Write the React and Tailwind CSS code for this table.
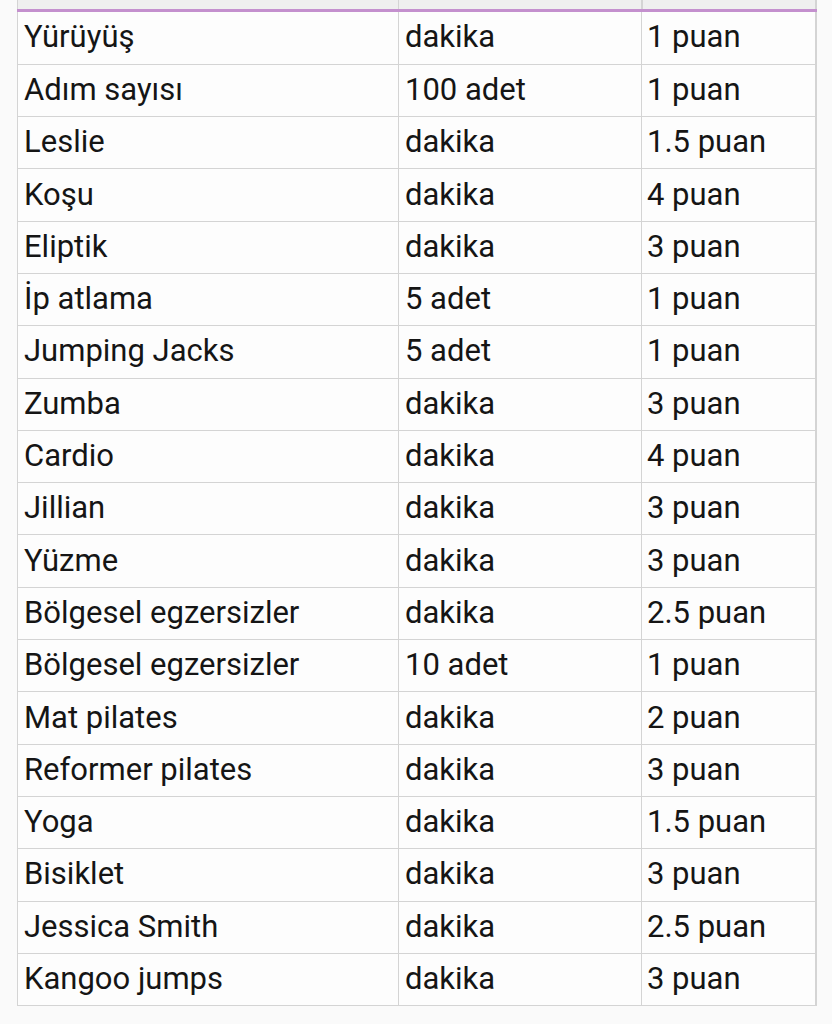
const rows = [
  ["Yürüyüş", "dakika", "1 puan"],
  ["Adım sayısı", "100 adet", "1 puan"],
  ["Leslie", "dakika", "1.5 puan"],
  ["Koşu", "dakika", "4 puan"],
  ["Eliptik", "dakika", "3 puan"],
  ["İp atlama", "5 adet", "1 puan"],
  ["Jumping Jacks", "5 adet", "1 puan"],
  ["Zumba", "dakika", "3 puan"],
  ["Cardio", "dakika", "4 puan"],
  ["Jillian", "dakika", "3 puan"],
  ["Yüzme", "dakika", "3 puan"],
  ["Bölgesel egzersizler", "dakika", "2.5 puan"],
  ["Bölgesel egzersizler", "10 adet", "1 puan"],
  ["Mat pilates", "dakika", "2 puan"],
  ["Reformer pilates", "dakika", "3 puan"],
  ["Yoga", "dakika", "1.5 puan"],
  ["Bisiklet", "dakika", "3 puan"],
  ["Jessica Smith", "dakika", "2.5 puan"],
  ["Kangoo jumps", "dakika", "3 puan"],
];

export default function App() {
  return (
    <div className="min-h-[1024px] w-[832px] bg-[#fafafa] pl-[17px] text-[#151515] [font-family:Roboto,'Noto_Sans',sans-serif]">
      <table className="w-[798px] table-fixed border-collapse bg-[#fdfdfd]">
        <colgroup>
          <col className="w-[381px]" />
          <col className="w-[243px]" />
          <col className="w-[174px]" />
        </colgroup>
        <thead>
          <tr className="h-[10px] border-b-[3px] border-b-[#c490ce] bg-[#efefef]">
            <th className="border-x border-[#d4d4d4]"></th>
            <th className="border-x border-[#d4d4d4]"></th>
            <th className="border-x-2 border-[#d4d4d4]"></th>
          </tr>
        </thead>
        <tbody>
          {rows.map(([name, unit, pts], i) => (
            <tr
              key={i}
              className={
                (i === 0 ? "h-[54.3px] " : "h-[52.3px] ") +
                "border-b border-[#d4d4d4] text-[31px] leading-none"
              }
            >
              <td className="border-x border-[#d4d4d4] px-[6px] pb-[2px]">{name}</td>
              <td className="border-x border-[#d4d4d4] px-[6px] pb-[2px]">{unit}</td>
              <td className="border-l border-r-2 border-[#d4d4d4] px-[5px] pb-[2px]">{pts}</td>
            </tr>
          ))}
        </tbody>
      </table>
    </div>
  );
}
